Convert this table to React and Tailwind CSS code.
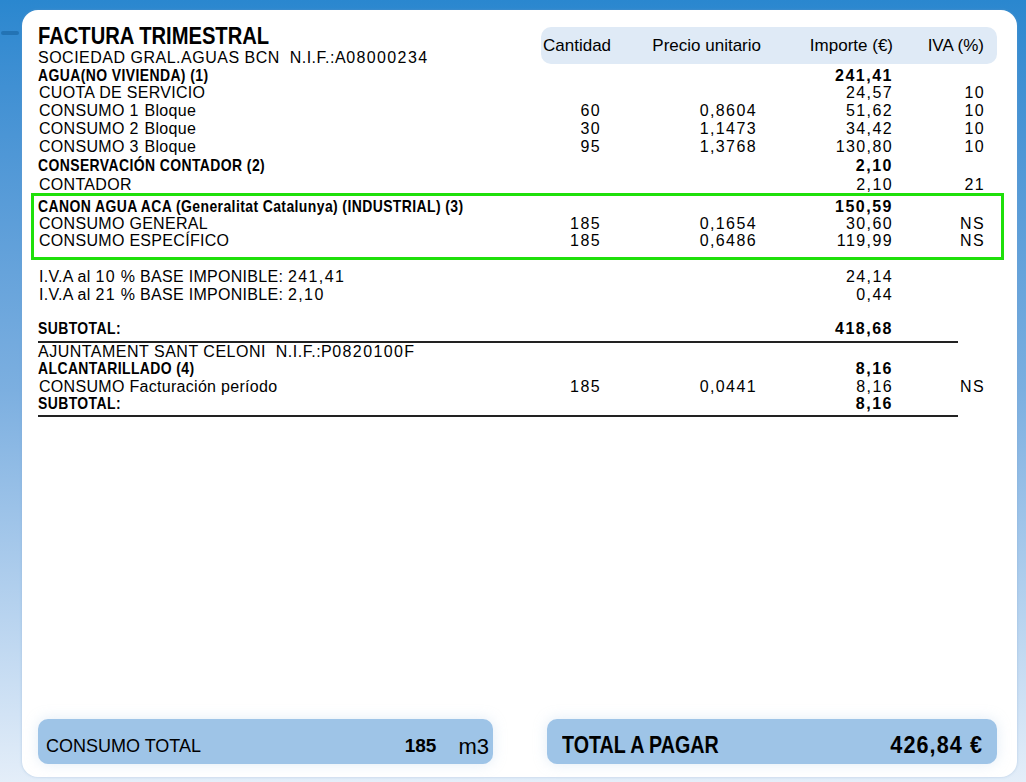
import React from "react";

// Factura trimestral – recreated invoice card

const COLS = "grid grid-cols-[472px_91px_156px_136px_92px]";

// digits in the printed bill are spaced wider than letters
function Spaced({ text }) {
  return text.split(/(\d[\d,]*)/).map((part, i) =>
    /\d/.test(part) ? (
      <span key={i} className="tracking-[1.4px]">
        {part}
      </span>
    ) : (
      <span key={i}>{part}</span>
    )
  );
}

function Row({ label, qty, price, amount, iva, bold, boldAmount, h }) {
  return (
    <div className={`${COLS} ${h} whitespace-nowrap`}>
      <div className={bold ? "text-[17px] font-bold" : "text-[16px] pl-[1px] tracking-[0.3px]"}>
        {bold ? (
          <span className="inline-block origin-left scale-x-[0.82] tracking-[0.5px]">{label}</span>
        ) : (
          <Spaced text={label} />
        )}
      </div>
      <div className="text-right text-[16px] tracking-[1.4px]">{qty}</div>
      <div className="text-right text-[16px] tracking-[1.4px]">{price}</div>
      {boldAmount ? (
        <div className="text-right text-[16px] font-bold tracking-[1.5px]">{amount}</div>
      ) : (
        <div className="text-right text-[16px] tracking-[1.4px]">{amount}</div>
      )}
      <div className="text-right text-[16px] tracking-[1.4px]">{iva}</div>
    </div>
  );
}

export default function App() {
  return (
    <div className="relative h-[782px] w-full overflow-hidden bg-linear-to-b from-[#2a87cf] via-[#7cafe0] to-[#e4eef9] pl-[22px] pr-[9px] pt-[10px] pb-[5px] flex font-['Liberation_Sans',Arial,sans-serif] text-black">
      {/* little wave mark on the left edge */}
      <div className="absolute left-[1px] top-[31px] w-[18px] h-[4px] rounded-full bg-[#1d6aa8] opacity-70" />

      <div className="flex-1 flex flex-col bg-white rounded-[16px] pl-[16px] pr-[32px] pt-[14px] pb-[13px] shadow-[0_0_3px_rgba(120,160,200,0.4)]">
        {/* Header */}
        <div className="flex justify-between">
          <div>
            <h1 className="h-[25px] leading-[24px] text-[24px] font-bold whitespace-nowrap">
              <span className="inline-block origin-left scale-x-[0.84]">FACTURA TRIMESTRAL</span>
            </h1>
            <p className="h-[18px] leading-[18px] text-[16px] tracking-[0.5px] whitespace-nowrap">
              <Spaced text={"SOCIEDAD GRAL.AGUAS BCN\u00a0\u00a0N.I.F.:A08000234"} />
            </p>
          </div>
          <div className="mt-[3px] -mr-[12px] w-[456px] h-[37px] rounded-[10px] bg-[#dfeaf6] grid grid-cols-[71px_147px_132px_91px] items-center pl-[2px] text-[17px] whitespace-nowrap">
            <span>Cantidad</span>
            <span className="text-right">Precio unitario</span>
            <span className="text-right">Importe (€)</span>
            <span className="text-right">IVA (%)</span>
          </div>
        </div>

        {/* Agua */}
        <Row label="AGUA(NO VIVIENDA) (1)" amount="241,41" bold boldAmount h="h-[17px] leading-[17px]" />
        <Row label="CUOTA DE SERVICIO" amount="24,57" iva="10" h="h-[18px] leading-[18px]" />
        <Row label="CONSUMO 1 Bloque" qty="60" price="0,8604" amount="51,62" iva="10" h="h-[18px] leading-[18px]" />
        <Row label="CONSUMO 2 Bloque" qty="30" price="1,1473" amount="34,42" iva="10" h="h-[18px] leading-[18px]" />
        <Row label="CONSUMO 3 Bloque" qty="95" price="1,3768" amount="130,80" iva="10" h="h-[18px] leading-[18px]" />
        <Row label="CONSERVACIÓN CONTADOR (2)" amount="2,10" bold boldAmount h="h-[20px] leading-[20px]" />
        <Row label="CONTADOR" amount="2,10" iva="21" h="h-[17px] leading-[17px]" />

        {/* Canon highlighted */}
        <div className="-ml-[7px] -mr-[19px] border-[3px] border-[#1fe00a] pl-[4px] pr-[16px] pt-[2px] pb-[7px]">
          <Row label="CANON AGUA ACA (Generalitat Catalunya) (INDUSTRIAL) (3)" amount="150,59" bold boldAmount h="h-[17px] leading-[17px]" />
          <Row label="CONSUMO GENERAL" qty="185" price="0,1654" amount="30,60" iva="NS" h="h-[17px] leading-[17px]" />
          <Row label="CONSUMO ESPECÍFICO" qty="185" price="0,6486" amount="119,99" iva="NS" h="h-[18px] leading-[18px]" />
        </div>

        {/* IVA */}
        <div className="mt-[8px]">
          <Row label="I.V.A al 10 % BASE IMPONIBLE: 241,41" amount="24,14" h="h-[18px] leading-[18px]" />
          <Row label="I.V.A al 21 % BASE IMPONIBLE: 2,10" amount="0,44" h="h-[17px] leading-[17px]" />
        </div>

        <div className="mt-[17px]">
          <Row label="SUBTOTAL:" amount="418,68" bold boldAmount h="h-[17px] leading-[17px]" />
        </div>
        <div className="mt-[4px] w-[920px] h-[2px] bg-[#222]" />

        {/* Alcantarillado */}
        <p className="h-[17px] leading-[17px] text-[16px] tracking-[0.5px] whitespace-nowrap">
          <Spaced text={"AJUNTAMENT SANT CELONI\u00a0\u00a0N.I.F.:P0820100F"} />
        </p>
        <Row label="ALCANTARILLADO (4)" amount="8,16" bold boldAmount h="h-[18px] leading-[18px]" />
        <Row label="CONSUMO Facturación período" qty="185" price="0,0441" amount="8,16" iva="NS" h="h-[18px] leading-[18px]" />
        <Row label="SUBTOTAL:" amount="8,16" bold boldAmount h="h-[15px] leading-[15px]" />
        <div className="mt-[4px] w-[920px] h-[2px] bg-[#222]" />

        <div className="flex-1" />

        {/* Totals */}
        <div className="flex gap-[54px] -mr-[20px]">
          <div className="w-[455px] h-[45px] rounded-[10px] bg-[#9ec4e7] flex items-center pt-[10px] pl-[8px] pr-[4px] shadow-[0_0_14px_rgba(170,200,230,0.35)]">
            <span className="text-[18px]">CONSUMO TOTAL</span>
            <span className="ml-auto text-[19px] font-bold">185</span>
            <span className="ml-[22px] text-[22px]">m3</span>
          </div>
          <div className="w-[450px] h-[45px] rounded-[10px] bg-[#9ec4e7] flex items-center justify-between pt-[7px] pl-[15px] pr-[14px] shadow-[0_0_14px_rgba(170,200,230,0.35)] whitespace-nowrap">
            <span className="text-[24px] font-bold">
              <span className="inline-block origin-left scale-x-[0.82]">TOTAL A PAGAR</span>
            </span>
            <span className="text-[24px] font-bold">
              <span className="inline-block origin-right scale-x-[0.9] tracking-[1.2px]">426,84 €</span>
            </span>
          </div>
        </div>
      </div>
    </div>
  );
}
